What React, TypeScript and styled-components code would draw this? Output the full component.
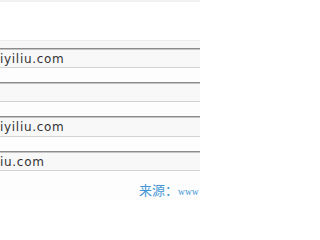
import React from "react";
import styled, { createGlobalStyle } from "styled-components";

const Global = createGlobalStyle`
  html, body { margin: 0; padding: 0; background: #ffffff; }
  body { width: 200px; height: 200px; overflow: hidden; }
`;

const Page = styled.div`
  width: 200px;
  height: 200px;
  display: flex;
  flex-direction: column;
  background: #fdfdfd;
  overflow: hidden;
`;

const TopStrip = styled.div`
  height: 2px;
  background: #f1f1f1;
`;

const Blank = styled.div`
  height: 38px;
  background: #ffffff;
  border-bottom: 1px solid #ececec;
`;

const Lead = styled.div`
  height: 7px;
  background: #f7f7f7;
`;

const Fields = styled.div`
  display: flex;
  flex-direction: column;
  gap: 14px;
`;

const Field = styled.div<{ $tall?: boolean }>`
  height: ${(p) => (p.$tall ? 18 : 17)}px;
  border-top: 1px solid #8c8c8c;
  box-shadow: inset 0 1px 0 #c4c4c4;
  border-bottom: 1px solid #d2d2d2;
  background: #f8f8f8;
  display: flex;
  align-items: center;
  padding-top: 1px;
  font-family: "DejaVu Sans", Verdana, sans-serif;
  font-size: 12px;
  letter-spacing: 0.7px;
  color: #333333;
  white-space: nowrap;
`;

const Source = styled.div`
  margin-top: 9px;
  padding-left: 139px;
  display: flex;
  align-items: baseline;
  white-space: nowrap;
  color: #4596d4;
`;

const Label = styled.span`
  font-family: "Noto Sans CJK SC", serif;
  font-size: 13px;
  letter-spacing: 0;
`;

const Url = styled.span`
  font-family: "Liberation Serif", serif;
  font-size: 9.5px;
  letter-spacing: 0;
`;

const rows = ["iyiliu.com", "", "iyiliu.com", "iu.com"];

export default function App() {
  return (
    <Page>
      <Global />
      <TopStrip />
      <Blank />
      <Lead />
      <Fields>
        {rows.map((t, i) => (
          <Field key={i} $tall={i === 2}>
            {t}
          </Field>
        ))}
      </Fields>
      <Source>
        <Label>来源：</Label>
        <Url>www</Url>
      </Source>
    </Page>
  );
}
